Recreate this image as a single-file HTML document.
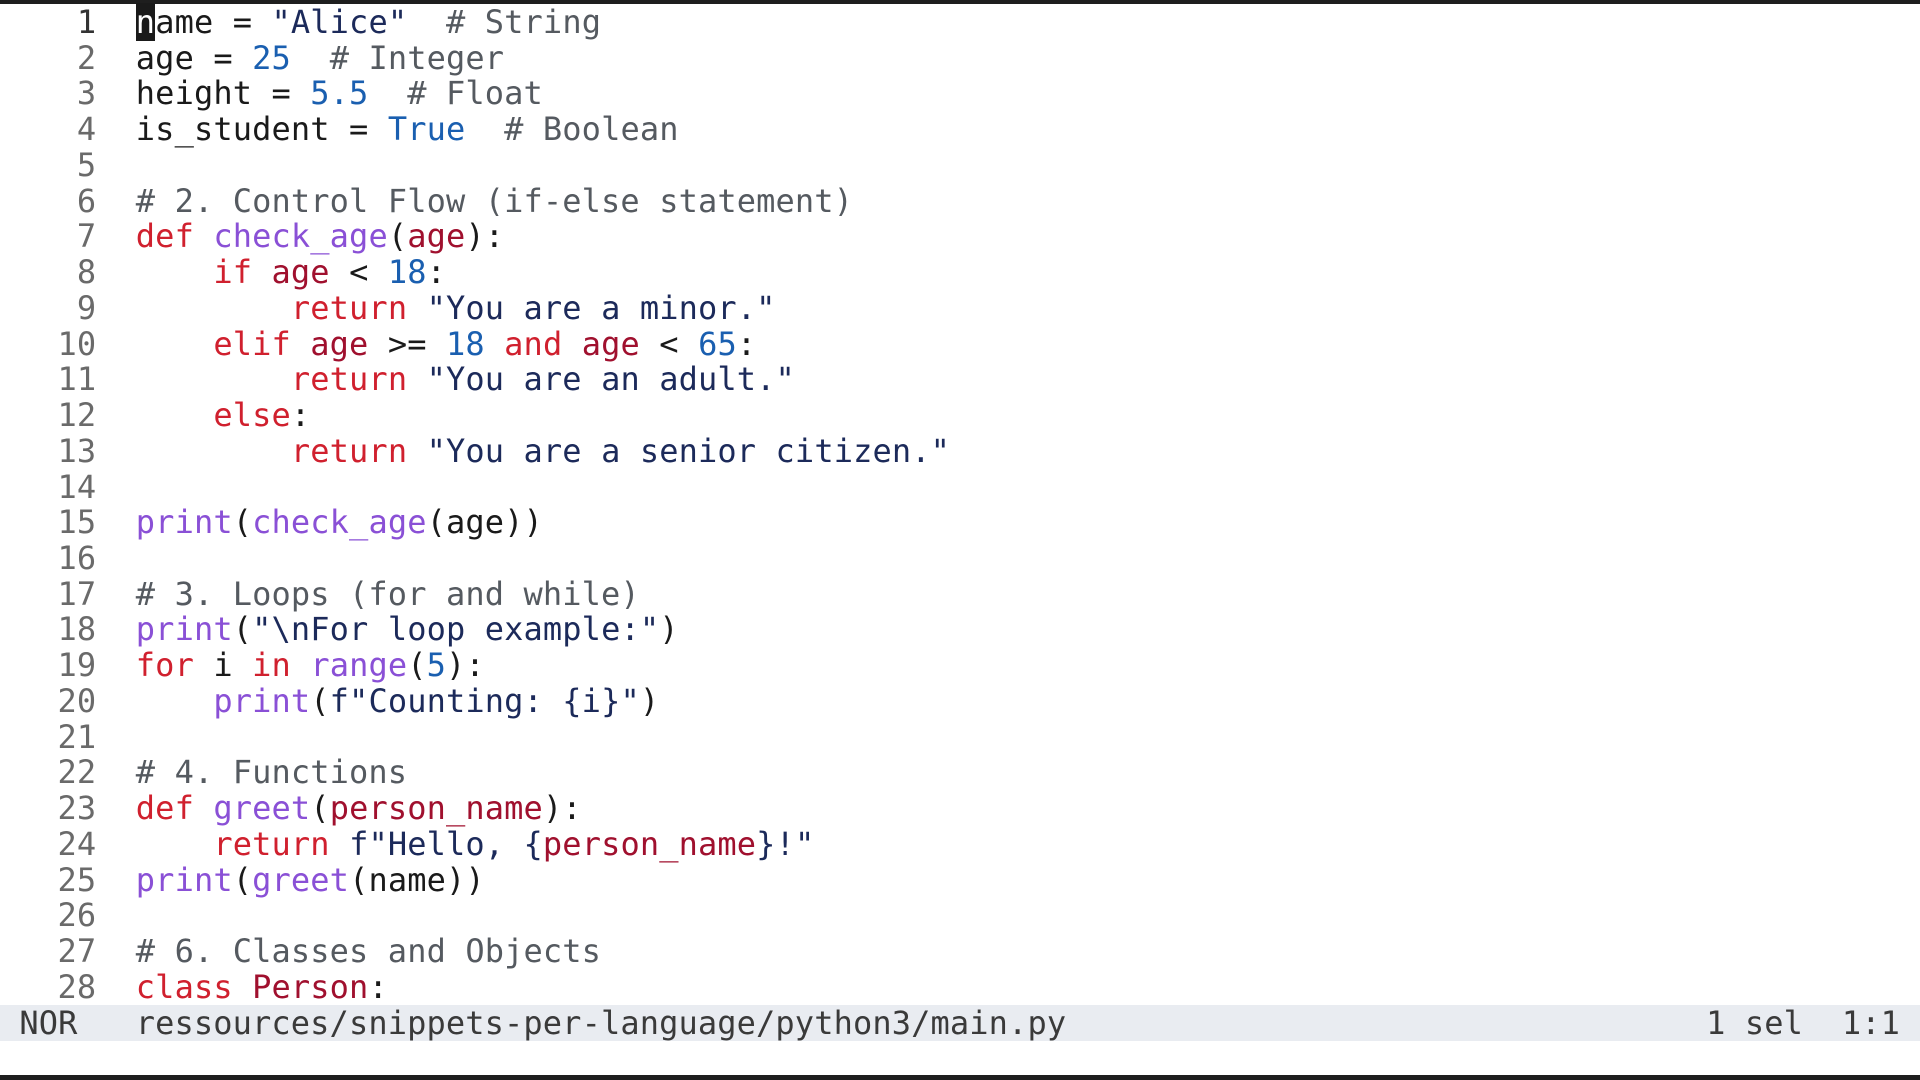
<!DOCTYPE html>
<html><head><meta charset="utf-8"><style>
html,body{margin:0;padding:0;width:1920px;height:1080px;overflow:hidden;background:#fff}
body{font-family:"DejaVu Sans Mono","Liberation Mono",monospace;font-size:32px;color:#1a1a1a;letter-spacing:0.12px}
.top{position:absolute;left:0;top:0;width:1920px;height:4px;background:#1e1e1e}
.bot{position:absolute;left:0;top:1075px;width:1920px;height:5px;background:#1e1e1e}
.code{position:absolute;left:0;top:5px}
.l{height:35.74px;line-height:35.74px;white-space:pre}
.n{display:inline-block;width:96.3px;text-align:right;color:#6a6a6a;margin-right:39.5px}
.cur .n{color:#333}
.k{color:#d0202e}.v{color:#a0102e}.f{color:#8a50d6}.d{color:#1a5fb0}.s{color:#1c2a5a}.c{color:#555a60}
.cs{background:#1a1a1a;color:#fff}
.st{position:absolute;left:0;top:1005px;width:1920px;height:36px;background:#e9ecf1;line-height:36px;white-space:pre;color:#3a3a3a}
</style></head><body>
<div class="top"></div>
<div class="code">
<div class="l cur"><span class="n">1</span><span class="cs">n</span>ame = <span class="s">"Alice"</span>  <span class="c"># String</span></div>
<div class="l"><span class="n">2</span>age = <span class="d">25</span>  <span class="c"># Integer</span></div>
<div class="l"><span class="n">3</span>height = <span class="d">5.5</span>  <span class="c"># Float</span></div>
<div class="l"><span class="n">4</span>is_student = <span class="d">True</span>  <span class="c"># Boolean</span></div>
<div class="l"><span class="n">5</span></div>
<div class="l"><span class="n">6</span><span class="c"># 2. Control Flow (if-else statement)</span></div>
<div class="l"><span class="n">7</span><span class="k">def</span> <span class="f">check_age</span>(<span class="v">age</span>):</div>
<div class="l"><span class="n">8</span>    <span class="k">if</span> <span class="v">age</span> &lt; <span class="d">18</span>:</div>
<div class="l"><span class="n">9</span>        <span class="k">return</span> <span class="s">"You are a minor."</span></div>
<div class="l"><span class="n">10</span>    <span class="k">elif</span> <span class="v">age</span> &gt;= <span class="d">18</span> <span class="k">and</span> <span class="v">age</span> &lt; <span class="d">65</span>:</div>
<div class="l"><span class="n">11</span>        <span class="k">return</span> <span class="s">"You are an adult."</span></div>
<div class="l"><span class="n">12</span>    <span class="k">else</span>:</div>
<div class="l"><span class="n">13</span>        <span class="k">return</span> <span class="s">"You are a senior citizen."</span></div>
<div class="l"><span class="n">14</span></div>
<div class="l"><span class="n">15</span><span class="f">print</span>(<span class="f">check_age</span>(age))</div>
<div class="l"><span class="n">16</span></div>
<div class="l"><span class="n">17</span><span class="c"># 3. Loops (for and while)</span></div>
<div class="l"><span class="n">18</span><span class="f">print</span>(<span class="s">"\nFor loop example:"</span>)</div>
<div class="l"><span class="n">19</span><span class="k">for</span> i <span class="k">in</span> <span class="f">range</span>(<span class="d">5</span>):</div>
<div class="l"><span class="n">20</span>    <span class="f">print</span>(<span class="s">f"Counting: {i}"</span>)</div>
<div class="l"><span class="n">21</span></div>
<div class="l"><span class="n">22</span><span class="c"># 4. Functions</span></div>
<div class="l"><span class="n">23</span><span class="k">def</span> <span class="f">greet</span>(<span class="v">person_name</span>):</div>
<div class="l"><span class="n">24</span>    <span class="k">return</span> <span class="s">f"Hello, {</span><span class="v">person_name</span><span class="s">}!"</span></div>
<div class="l"><span class="n">25</span><span class="f">print</span>(<span class="f">greet</span>(name))</div>
<div class="l"><span class="n">26</span></div>
<div class="l"><span class="n">27</span><span class="c"># 6. Classes and Objects</span></div>
<div class="l"><span class="n">28</span><span class="k">class</span> <span class="v">Person</span>:</div>
</div>
<div class="st"> NOR   ressources/snippets-per-language/python3/main.py<span style="position:absolute;right:20px;top:0">1 sel  1:1</span></div>
<div class="bot"></div>
</body></html>
